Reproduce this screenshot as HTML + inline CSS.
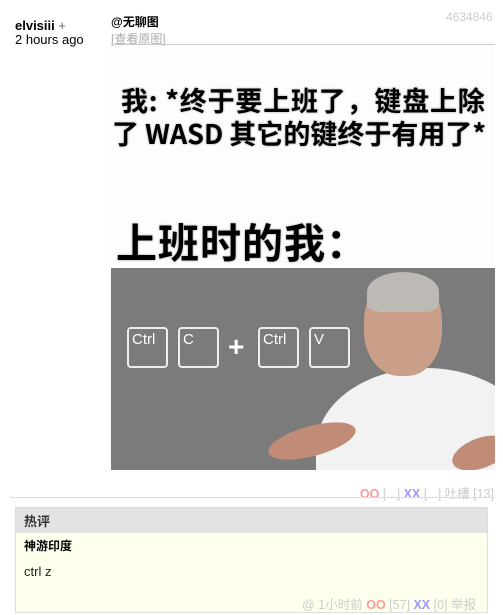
<!DOCTYPE html>
<html><head><meta charset="utf-8"><style>
*{margin:0;padding:0;box-sizing:border-box}
body{width:503px;height:615px;background:#fff;position:relative;overflow:hidden;font-family:"Liberation Sans","Noto Sans CJK SC",sans-serif;font-size:13px;color:#000}
.a{position:absolute;white-space:nowrap}
.key{position:absolute;width:41px;height:41px;border:2px solid #eee;border-radius:4px;color:#fff;font-size:15px;padding:2px 0 0 3px;font-family:"Liberation Sans",sans-serif}
.big{font-weight:bold;font-family:"Noto Sans CJK SC",sans-serif;text-shadow:0 0 2px #999}
</style></head><body>
<div class="a" style="left:15px;top:19px;line-height:14px"><b>elvisiii</b> <span style="color:#666">+</span><br>2 hours ago</div>
<div class="a" style="left:111px;top:13px;font-weight:bold;font-size:12px">@无聊图</div>
<div class="a" style="left:111px;top:30px;color:#aaa;font-size:12px">[查看原图]</div>
<div class="a" style="left:446px;top:10px;color:#ccc;font-size:12px">4634846</div>
<div class="a" style="left:111px;top:44px;width:384px;height:1px;background:#ccc"></div>
<div class="a" style="left:111px;top:46px;width:384px;height:224px;background:#fdfdfd"></div>
<div class="a big" style="left:121px;top:80px;font-size:27px;letter-spacing:0.8px">我: *终于要上班了，键盘上除</div>
<div class="a big" style="left:112px;top:113px;font-size:27px;letter-spacing:0px">了 WASD 其它的键终于有用了*</div>
<div class="a big" style="left:116px;top:210px;font-size:41px;letter-spacing:1px">上班时的我：</div>
<div class="a" style="left:111px;top:268px;width:384px;height:202px;background:#7b7b7b;overflow:hidden">
<div class="key" style="left:16px;top:59px">Ctrl</div>
<div class="key" style="left:67px;top:59px">C</div>
<div class="a" style="left:117px;top:63px;color:#fff;font-size:28px;font-weight:bold">+</div>
<div class="key" style="left:147px;top:59px">Ctrl</div>
<div class="key" style="left:198px;top:59px">V</div>
<div class="a" style="left:205px;top:100px;width:220px;height:160px;border-radius:50% 50% 0 0;background:#f2f2f2"></div>
<div class="a" style="left:253px;top:8px;width:78px;height:100px;border-radius:45%;background:#c99f8a"></div>
<div class="a" style="left:256px;top:4px;width:72px;height:40px;border-radius:50% 50% 20% 20%;background:#bdb9b4"></div>
<div class="a" style="left:156px;top:158px;width:90px;height:30px;border-radius:50%;background:#c08c78;transform:rotate(-15deg)"></div>
<div class="a" style="left:340px;top:170px;width:60px;height:30px;border-radius:50%;background:#c08c78;transform:rotate(-20deg)"></div>
</div>
<div class="a" style="right:9px;top:483px;font-size:12.5px;color:#ccc"><b style="color:#f99">OO</b> [...] <b style="color:#99f">XX</b> [...] 吐槽 [13]</div>
<div class="a" style="left:10px;top:497px;width:485px;height:1px;background:#ddd"></div>
<div class="a" style="left:15px;top:507px;width:473px;height:106px;border:1px solid #ddd;background:#ffffee"></div>
<div class="a" style="left:16px;top:508px;width:471px;height:25px;background:#e3e3e3"></div>
<div class="a" style="left:24px;top:511px;font-weight:bold;color:#333;font-size:13px">热评</div>
<div class="a" style="left:24px;top:537px;font-weight:bold;font-size:12px">神游印度</div>
<div class="a" style="left:24px;top:564px;font-size:13px;color:#222">ctrl z</div>
<div class="a" style="right:27px;top:594px;color:#ccc;font-size:12.5px">@ 1小时前 <b style="color:#f99">OO</b> [57] <b style="color:#99f">XX</b> [0] 举报</div>
</body></html>
